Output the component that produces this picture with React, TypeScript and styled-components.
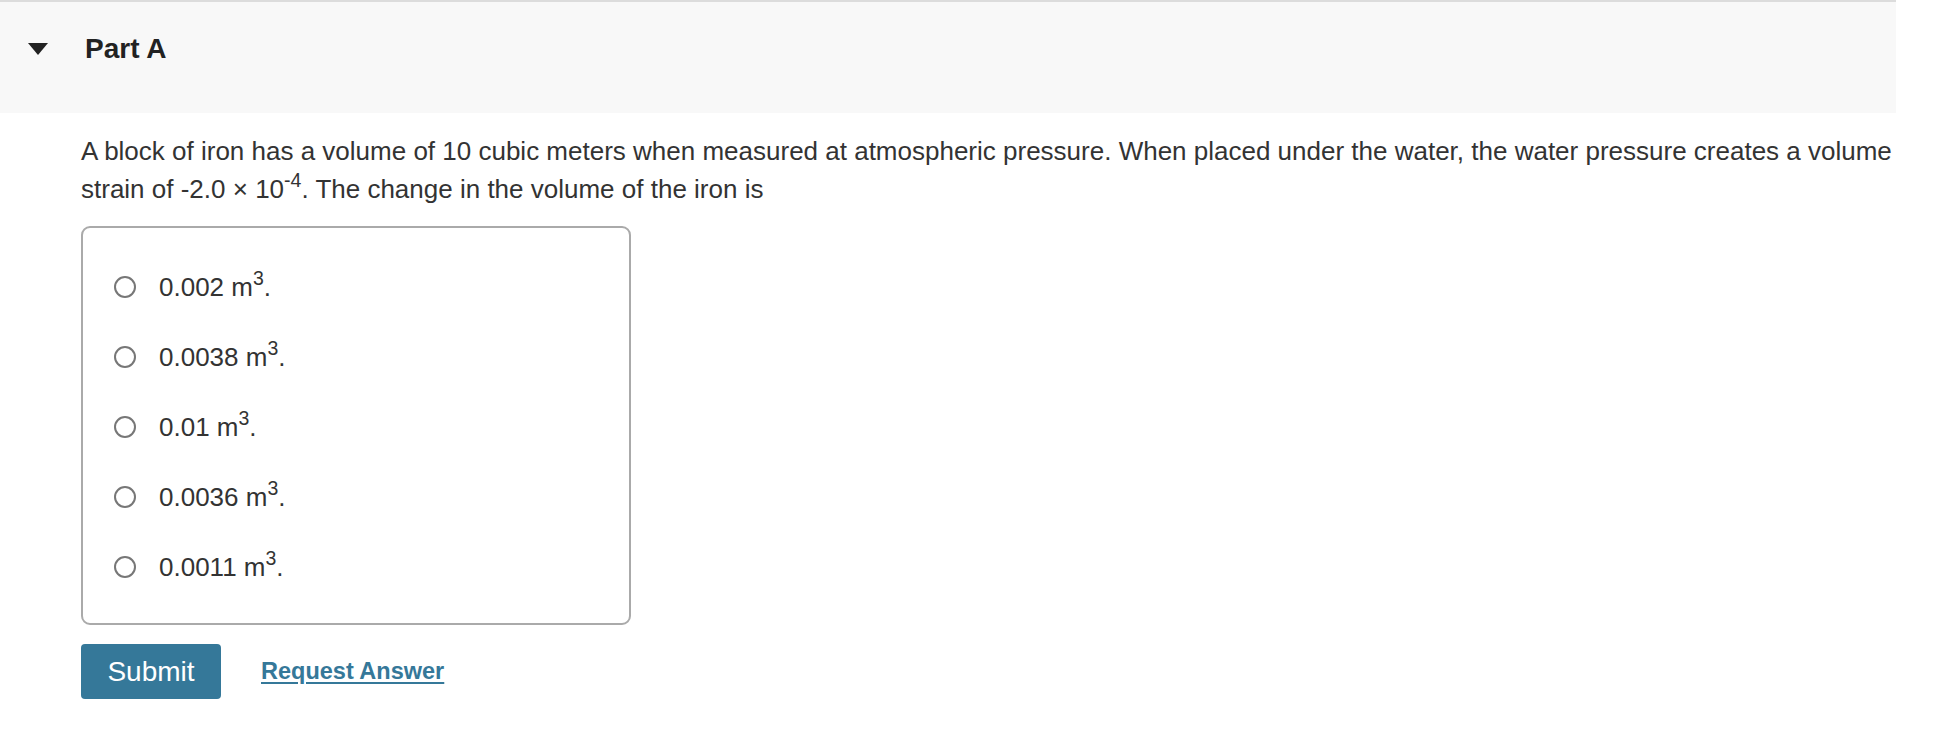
import React from 'react';
import styled, { createGlobalStyle } from 'styled-components';

const GlobalStyle = createGlobalStyle`
    html, body {
        margin: 0;
        padding: 0;
        background: #fff;
    }
    body {
        font-family: "Liberation Sans", Arial, Helvetica, sans-serif;
        color: #333;
    }
`;

const Page = styled.div`
    width: 1896px;
`;

const PartHeader = styled.div`
    display: flex;
    align-items: flex-start;
    border-top: 2px solid #dcdcdc;
    background: #f8f8f8;
    padding-top: 31px;
    height: 80px;
`;

const Toggle = styled.span`
    display: block;
    width: 0;
    height: 0;
    margin: 10px 37px 0 28px;
    border-left: 10px solid transparent;
    border-right: 10px solid transparent;
    border-top: 12px solid #222;
`;

const PartTitle = styled.h2`
    margin: 0;
    font-size: 28px;
    line-height: 32px;
    font-weight: bold;
    color: #222;
`;

const Body = styled.div`
    padding: 19px 0 0 81px;
`;

const Prompt = styled.p`
    margin: 0;
    font-size: 26px;
    line-height: 38px;
`;

const Sup = styled.sup`
    font-size: 0.75em;
    line-height: 0;
    vertical-align: 0.55em;
`;

const Choices = styled.div`
    width: 546px;
    margin-top: 18px;
    border: 2px solid #aaa;
    border-radius: 9px;
    padding: 24px 0 21px;
    display: flex;
    flex-direction: column;
`;

const Choice = styled.label`
    display: flex;
    align-items: center;
    height: 70px;
    padding-left: 31px;
    font-size: 26px;
    cursor: pointer;
`;

const Radio = styled.span`
    display: block;
    flex: none;
    width: 18px;
    height: 18px;
    border: 2px solid #777;
    border-radius: 50%;
    margin-right: 23px;
    background: #fff;
`;

const Actions = styled.div`
    display: flex;
    align-items: center;
    gap: 40px;
    margin-top: 19px;
`;

const SubmitButton = styled.button`
    width: 140px;
    height: 55px;
    border: none;
    border-radius: 4px;
    background: #357899;
    color: #fff;
    font-family: inherit;
    font-size: 28px;
    cursor: pointer;
`;

const RequestLink = styled.a`
    color: #357899;
    font-size: 23.5px;
    font-weight: bold;
    text-decoration: underline;
    text-underline-offset: 3px;
    cursor: pointer;
`;

const answers = ['0.002', '0.0038', '0.01', '0.0036', '0.0011'];

const App: React.FC = () => {
    return (
        <Page>
            <GlobalStyle />
            <PartHeader>
                <Toggle />
                <PartTitle>Part A</PartTitle>
            </PartHeader>
            <Body>
                <Prompt>
                    A block of iron has a volume of 10 cubic meters when measured at atmospheric pressure. When placed
                    under the water, the water pressure creates a volume strain of -2.0 &times; 10<Sup>-4</Sup>. The
                    change in the volume of the iron is
                </Prompt>
                <Choices>
                    {answers.map((a) => (
                        <Choice key={a}>
                            <Radio />
                            <span>
                                {a} m<Sup>3</Sup>.
                            </span>
                        </Choice>
                    ))}
                </Choices>
                <Actions>
                    <SubmitButton>Submit</SubmitButton>
                    <RequestLink>Request Answer</RequestLink>
                </Actions>
            </Body>
        </Page>
    );
};

export default App;
